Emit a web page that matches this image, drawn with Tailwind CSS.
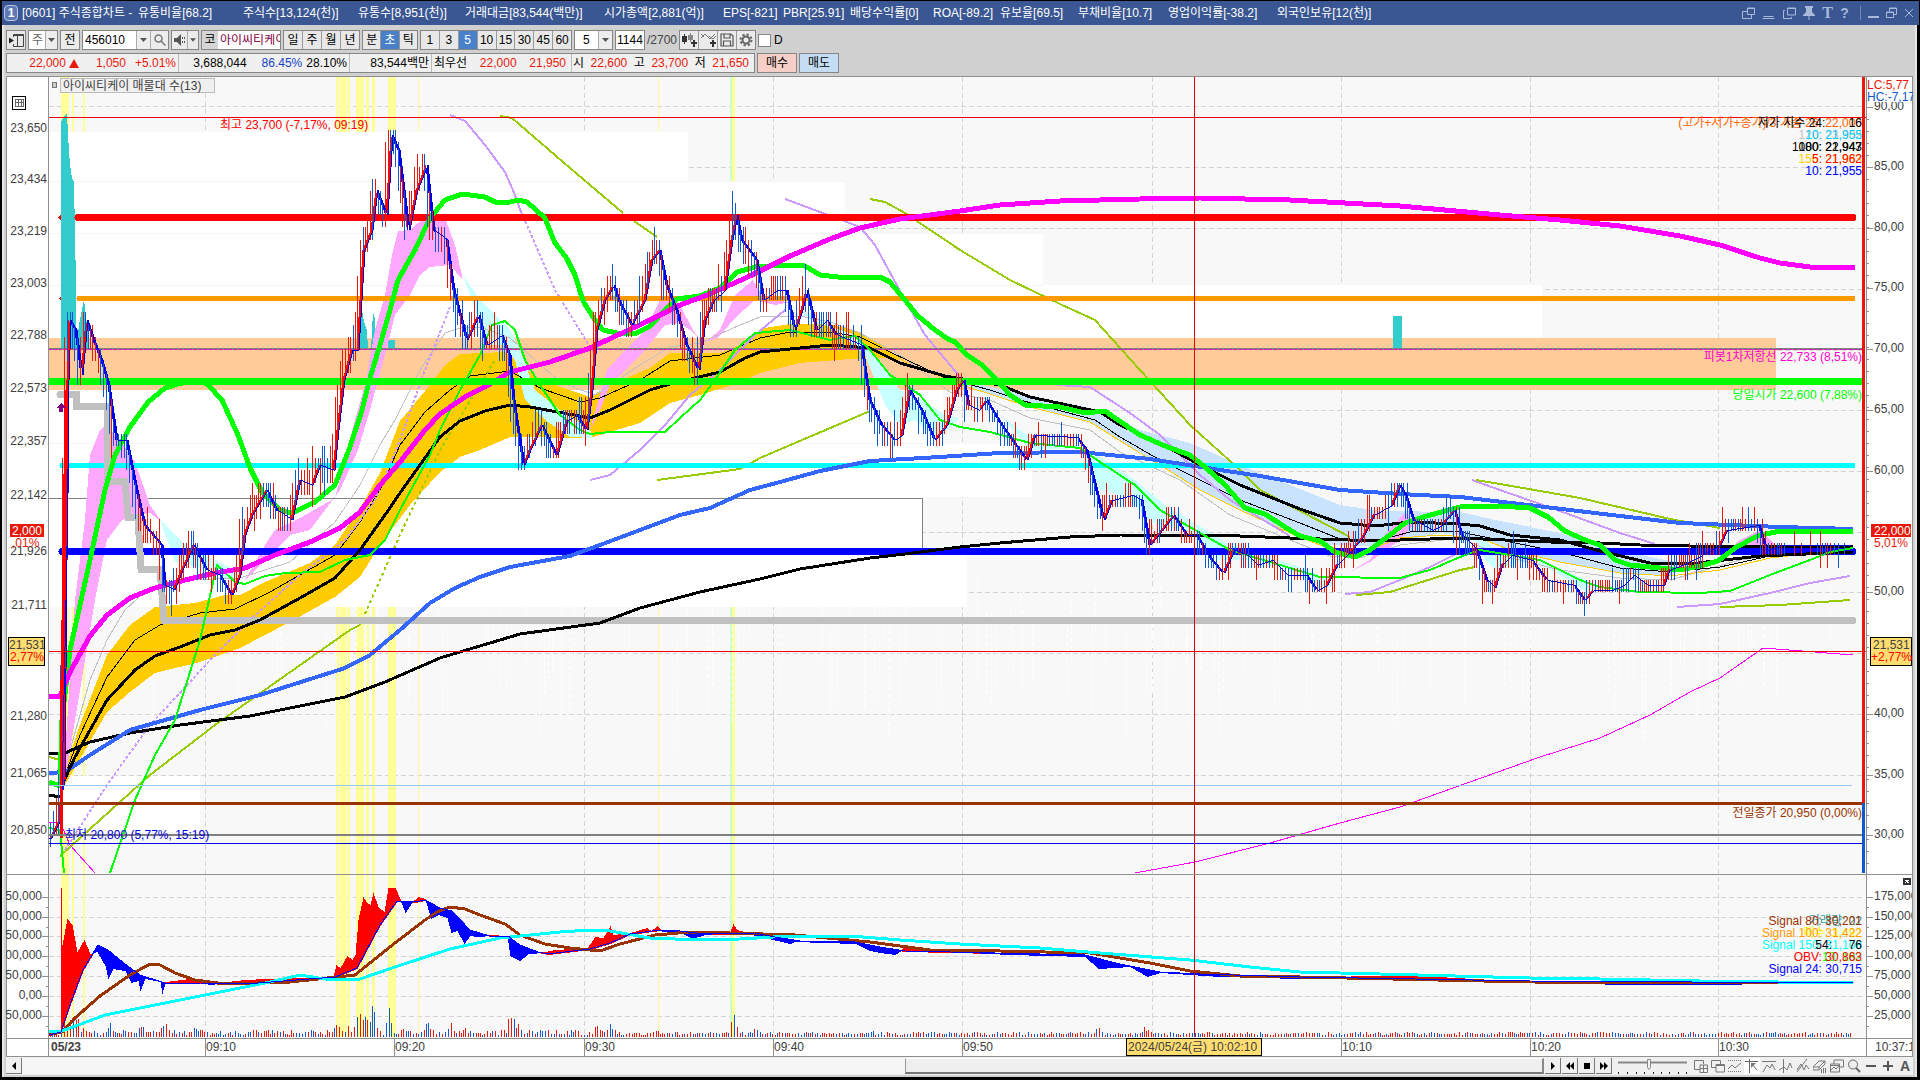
<!DOCTYPE html>
<html lang="ko">

<head>
  <meta charset="UTF-8" />
  <meta name="viewport" content="width=device-width, initial-scale=1.0" />
  <title>[0601] 주식종합차트</title>
  <script src="https://cdn.jsdelivr.net/npm/@tailwindcss/browser@4"></script>
</head>

<body class="bg-black pt-px font-['Liberation_Sans','Noto_Sans_CJK_KR',sans-serif] text-xs leading-none text-black">
  <!-- Title bar -->
  <header class="mr-px ml-[2px] flex h-6 items-center bg-[#3a5693] pl-[2px] text-white">
    <span class="mr-1 flex h-4 w-[14px] items-center justify-center rounded-sm border border-[#b9c6e4] bg-[#5f7ab3] font-bold">1</span>
    <h1 class="flex gap-[7px] whitespace-nowrap">
      <span class="w-[109px]">[0601] 주식종합차트 -</span>
      <span class="w-[98px]">유통비율[68.2]</span>
      <span class="w-[108px]">주식수[13,124(천)]</span>
      <span class="w-[100px]">유통수[8,951(천)]</span>
      <span class="w-[132px]">거래대금[83,544(백만)]</span>
      <span class="w-[112px]">시가총액[2,881(억)]</span>
      <span class="w-[53px]">EPS[-821]</span>
      <span class="w-[60px]">PBR[25.91]</span>
      <span class="w-[76px]">배당수익률[0]</span>
      <span class="w-[60px]">ROA[-89.2]</span>
      <span class="w-[71px]">유보율[69.5]</span>
      <span class="w-[83px]">부채비율[10.7]</span>
      <span class="w-[102px]">영업이익률[-38.2]</span>
      <span>외국인보유[12(천)]</span>
    </h1>
    <div class="ml-auto flex items-center gap-[7px] pr-[5px] text-[#a9b9da]">
      <button aria-label="분리"><svg class="h-3 w-[13px]" viewBox="0 0 13 12" fill="none" stroke="currentColor"><path d="M5 4.500H.500v7h9V8M5.500 1h7v6.500h-7zM5.500 1.500h7" /></svg></button>
      <button aria-label="접기"><svg class="h-3 w-[13px]" viewBox="0 0 13 12" fill="none" stroke="currentColor"><path d="M1.500 9.500h10M.500 11.500h12" /></svg></button>
      <button aria-label="복사" class="ml-px"><svg class="h-3 w-[13px]" viewBox="0 0 13 12" fill="none" stroke="currentColor"><path d="M4.500 1h8v7h-8zM4.500 1.500h8M2 3.500H.500v8h8V10" /></svg></button>
      <button aria-label="고정"><svg class="h-[14px] w-3" viewBox="0 0 12 14" fill="currentColor"><path d="M2 0h8v2H9v4l3 3v1H6.500v4h-1v-4H0V9l3-3V2H2z" /></svg></button>
      <button aria-label="글꼴" class="w-[11px] font-['Liberation_Serif',serif] text-base font-bold leading-none">T</button>
      <button aria-label="도움말" class="w-[9px] text-sm font-bold leading-none">?</button>
      <span class="ml-1 h-[14px] w-px bg-[#7488ae]"></span>
      <button aria-label="최소화"><svg class="h-3 w-[11px]" viewBox="0 0 11 12"><path d="M0 9h11v2H0z" fill="currentColor" /></svg></button>
      <button aria-label="복원"><svg class="h-3 w-[11px]" viewBox="0 0 11 12" fill="none" stroke="currentColor"><path d="M3.500 4V1h7v6.500H8M3 1.500h8M.500 5h7v5.500h-7zM0 5.500h8" /></svg></button>
      <button aria-label="닫기"><svg class="h-3 w-[10px]" viewBox="0 0 10 12" fill="none" stroke="currentColor"><path d="M1 2l8 8M9 2l-8 8" /></svg></button>
    </div>
  </header>

  <div class="mr-[3px] ml-[2px] border-r-2 border-l-2 border-[#e6e6e6] bg-[#d0d0d0] px-[2px] pb-[2px]">
    <!-- Toolbar -->
    <div class="flex h-[25px] items-end gap-[2px] whitespace-nowrap">
      <button aria-label="패널" class="flex h-5 w-5 items-center justify-center border border-[#868686] bg-[#e8e8e8]">
        <svg class="h-[13px] w-[15px]" viewBox="0 0 15 13" fill="none" stroke="#444"><path d="M4.500 3V.500h10v12h-10V10M4 1.500h11M8.500 1v11" /><path d="M0 3.500v6l5-3z" fill="#222" stroke="none" /></svg>
      </button>
      <label class="relative flex h-5 w-[30px] items-center border border-[#868686] bg-white">
        <select aria-label="주기" class="h-full w-full appearance-none pl-[3px] text-[#666]"><option>주</option></select>
        <span class="pointer-events-none absolute top-0 right-0 flex h-full w-3 items-center justify-center border-l border-[#aaa] bg-[#ededed]"><svg class="h-1 w-[7px]" viewBox="0 0 7 4"><path d="M0 0h7L3.500 4z" fill="#555" /></svg></span>
      </label>
      <button class="h-5 w-5 border border-[#868686] bg-[#ebebeb]">전</button>
      <div class="flex h-5 w-[87px] border border-[#868686] bg-white">
        <input aria-label="종목코드" value="456010" class="h-full w-[53px] pl-[2px]" />
        <button aria-label="종목 목록" class="flex w-[14px] items-center justify-center border-l border-[#aaa] bg-[#ededed]"><svg class="h-1 w-[7px]" viewBox="0 0 7 4"><path d="M0 0h7L3.500 4z" fill="#555" /></svg></button>
        <button aria-label="검색" class="flex w-[18px] items-center justify-center border-l border-[#aaa] bg-[#ededed]"><svg class="h-3 w-3" viewBox="0 0 12 12" fill="none" stroke="#777" stroke-width="1.500"><circle cx="4.500" cy="4.500" r="3.500" /><path d="M7 7l4.500 4.500" /></svg></button>
      </div>
      <div class="flex h-5 w-7 border border-[#868686] bg-[#ebebeb]">
        <button aria-label="소리" class="flex w-4 items-center justify-center"><svg class="h-3 w-3" viewBox="0 0 12 12" fill="#555"><path d="M0 4h3l4-4v12L3 8H0zM8 3h1v2H8zM8 7h1v2H8zM10 3h1v2h-1zM10 7h1v2h-1z" /></svg></button>
        <button aria-label="소리 설정" class="flex w-[11px] items-center justify-center border-l border-[#aaa]"><svg class="h-1 w-[6px]" viewBox="0 0 7 4"><path d="M0 0h7L3.500 4z" fill="#555" /></svg></button>
      </div>
      <div class="flex h-5 w-20 items-center overflow-hidden border border-[#868686] bg-white">
        <span class="flex h-full w-4 shrink-0 items-center justify-center bg-[#d5d5d5]">코</span>
        <span class="ml-[2px] w-[60px] overflow-hidden text-[#800040]">아이씨티케이</span>
      </div>
      <div class="flex h-5 w-[77px] divide-x divide-[#999] border border-[#868686] bg-[#e8e8e8]">
        <button class="flex-1">일</button><button class="flex-1">주</button><button class="flex-1">월</button><button class="flex-1">년</button>
      </div>
      <div class="flex h-5 w-[56px] divide-x divide-[#999] border border-[#868686] bg-[#e8e8e8]">
        <button class="flex-1">분</button><button class="flex-1 bg-[#4a80c8] text-white">초</button><button class="flex-1">틱</button>
      </div>
      <div class="flex h-5 w-[152px] divide-x divide-[#999] border border-[#868686] bg-[#e8e8e8]">
        <button class="flex-1">1</button><button class="flex-1">3</button><button class="flex-1 bg-[#4a80c8] text-white">5</button><button class="flex-1">10</button><button class="flex-1">15</button><button class="flex-1">30</button><button class="flex-1">45</button><button class="flex-1">60</button>
      </div>
      <label class="relative flex h-5 w-[39px] border border-[#868686] bg-white">
        <select aria-label="간격" class="h-full w-full appearance-none pl-2"><option>5</option></select>
        <span class="pointer-events-none absolute top-0 right-0 flex h-full w-[14px] items-center justify-center border-l border-[#aaa] bg-[#ededed]"><svg class="h-1 w-[7px]" viewBox="0 0 7 4"><path d="M0 0h7L3.500 4z" fill="#555" /></svg></span>
      </label>
      <input aria-label="봉 개수" value="1144" class="h-5 w-[30px] border border-[#868686] bg-white pl-px" />
      <span class="flex h-5 w-[30px] items-center text-[#444]">/2700</span>
      <div class="flex h-5 w-[77px] divide-x divide-[#999] border border-[#868686] bg-[#ebebeb]">
        <button aria-label="봉 추가" class="flex flex-1 items-center justify-center"><svg class="h-[14px] w-[15px]" viewBox="0 0 15 14"><path d="M0 3h5v6H0zM2 1h1v10H2z" fill="#333" /><path d="M6 2h5v5H6zM8 0h1v9H8z" fill="#888" /><path d="M11 7h2v2h2v2h-2v3h-2v-3H9V9h2z" fill="#333" /></svg></button>
        <button aria-label="지표 추가" class="flex flex-1 items-center justify-center"><svg class="h-[14px] w-[15px]" viewBox="0 0 15 14" fill="none" stroke="#777"><path d="M0 5l4-4 5 5 5-5M0 1l3 3M8 3l4 3 3-3" /><path d="M11 7h2v2h2v2h-2v3h-2v-3H9V9h2z" fill="#333" stroke="none" /></svg></button>
        <button aria-label="저장" class="flex flex-1 items-center justify-center"><svg class="h-[14px] w-[14px]" viewBox="0 0 14 14" fill="none" stroke="#555" stroke-width="1.200"><path d="M1 1h10l2 2v10H1zM4 1v4h6V1M3.500 13V8h7v5" /></svg></button>
        <button aria-label="설정" class="flex flex-1 items-center justify-center"><svg class="h-[14px] w-[14px]" viewBox="0 0 14 14" fill="none" stroke="#666"><circle cx="7" cy="7" r="3.500" stroke-width="2" /><circle cx="7" cy="7" r="5.500" stroke-width="2" stroke-dasharray="2.300 2" /></svg></button>
      </div>
      <label class="flex h-5 items-center gap-[3px]"><input type="checkbox" class="h-[13px] w-[13px] appearance-none border border-[#888] bg-white" />D</label>
    </div>

    <!-- Quote row -->
    <div class="mt-[3px] flex h-5 items-stretch gap-[2px] whitespace-nowrap text-[#e8190a]">
      <div class="flex w-[749px] divide-x divide-[#bbb] border border-[#868686] bg-[#f0f0f0]">
        <div class="flex w-[172px] items-center justify-end pr-[2px]">
          <span>22,000</span><svg class="ml-[3px] h-[9px] w-[10px]" viewBox="0 0 10 9"><path d="M5 0l5 9H0z" fill="#e8190a" /></svg>
          <span class="ml-[17px]">1,050</span><span class="ml-[9px]">+5.01%</span>
        </div>
        <div class="flex w-[171px] items-center justify-end gap-1 pr-[2px] text-black">
          <span class="mr-[11px]">3,688,044</span><span class="text-[#1543c5]">86.45%</span><span>28.10%</span>
        </div>
        <div class="flex w-[82px] items-center justify-end pr-[2px] text-black">83,544백만</div>
        <div class="flex w-[140px] items-center justify-between pr-[5px] pl-[2px]"><span class="text-black">최우선</span><span>22,000</span><span>21,950</span></div>
        <div class="flex flex-1 items-center justify-between pr-[5px] pl-px">
          <span class="text-black">시</span><span>22,600</span><span class="text-black">고</span><span>23,700</span><span class="text-black">저</span><span>21,650</span>
        </div>
      </div>
      <button class="w-10 border border-[#868686] bg-[#f6cfc9] text-black">매수</button>
      <button class="w-10 border border-[#868686] bg-[#c5ddf3] text-black">매도</button>
    </div>

    <!-- Chart -->
    <svg id="chart" class="mt-[3px] block w-full" viewBox="6 76 1907 981" shape-rendering="crispEdges" fill="none" font-size="12">
      <rect x="6" y="76" width="1909" height="981" fill="#fff" />
      <rect x="49" y="76" width="1817" height="961" fill="#f8f8f8" />
      <g id="grid" stroke="#d4d4d4" stroke-dasharray="5 3"></g>
      <g id="stripes" fill="#ffff99"></g>
      <!-- volume-at-price blocks -->
      <g fill="#fff">
        <path d="M49 132H688V182H845V233H1043V285H1542V338H49z" />
        <path d="M49 390H943V444H1032V497H922V549H967V607H49z" />
        <path d="M49 776H200V832H49z" />
      </g>
      <path d="M49 181.500H845M49 233.500H1043M49 285.500H1043M49 443.500H940" stroke="#f5f5f5" />
      <rect x="49" y="338" width="1727" height="52" fill="#ffcb99" />
      <path d="M49 498.500H922.500V549" stroke="#808080" />
      <g id="noise" stroke="#fff" stroke-dasharray="4 3"></g>
      <!-- teal histogram -->
      <path fill="#33cccc" d="M61 349V122L64 117L67 113L68 135L70 165L72 178L74 182L76 285V349zM76 349L79 325L84 300L87 325L89 349zM359 349L362 310L364 322L367 330L368 349zM371 349L373 312L375 318V349zM388 340h7v9h-7zM1393 316h9v33h-9z" />
      <g id="areas"></g>
      <g id="thin"></g>
      <path d="M49 348.500H1862" stroke="#808080" stroke-width="2" />
      <path d="M49 349.500H1862" stroke="#ff00cc" stroke-dasharray="3 2" />
      <g stroke-linecap="round">
        <path d="M78 217.500H1853" stroke="#f00" stroke-width="7" />
        <path d="M79 298.500H1853" stroke="#ff9900" stroke-width="5" />
        <path d="M62 465.500H1853" stroke="#0ff" stroke-width="5" />
        <path d="M62 551.500H1853" stroke="#00f" stroke-width="7" />
        <path d="M60 394.500H76V406H107V481H125L128 517H138L141 569H160L164 620.500H1853" stroke="#c0c0c0" stroke-width="7" />
      </g>
      <path d="M58 217.500l3-3v6zM59 298.500l2-2v4z" fill="#f00" />
      <g id="thick"></g>
      <path d="M49 381.500H1862" stroke="#0f0" stroke-width="7" />
      <g id="over"></g>
      <path d="M61 403l5 5h-3v4h-4v-4h-3z" fill="#800080" />
      <path d="M49 117.500H1866M49 651.500H1866" stroke="#f00000" />
      <path d="M49 785.500H1852" stroke="#99c8ff" />
      <path d="M49 803.500H1862" stroke="#993300" stroke-width="3" />
      <path d="M49 835H1862" stroke="#808080" stroke-width="2" />
      <path d="M49 843.500H1862" stroke="#0000e0" />
      <g id="sub"></g>
      <path d="M1194.500 77V1037" stroke="#e00000" />
      <path d="M1863.500 77V803" stroke="#e8190a" stroke-width="3" />
      <path d="M1863.500 803V873" stroke="#1159cc" stroke-width="3" />
      <!-- frame -->
      <path d="M6 76.500H1914.500M6.500 76V1057M48.500 76V1057M1866.500 76V1057M6 874.500H1914M6 1038.500H1914M6 1056.500H1914" stroke="#909090" />
      <g id="labels" fill="#404040"></g>
      <path d="M1912.500 76V1057" stroke="#909090" />

      <rect x="60.500" y="78.500" width="154" height="14" fill="#f0f0f0" stroke="#bbb" />
      <rect x="52.500" y="82.500" width="4" height="5" fill="#ccc" stroke="#777" />
      <text x="63" y="90" fill="#404040">아이씨티케이 매물대 수(13)</text>
      <path d="M15.500 99.500h8v7h-8zM15 102.500h9M18.500 99v8M21.500 99v8" stroke="#666" />
      <path d="M12.500 96.500h13v13h-13z" stroke="#000" />

      <text x="220" y="129" fill="#f00">최고 23,700 (-7,17%, 09:19)</text>
      <text x="65" y="839" fill="#0000e0">최저 20,800 (5,77%, 15:19)</text>
      <g text-anchor="end">
        <text x="1862" y="127" fill="#ff6600">(고가+저가+종가)/3 가중 26: 22,000</text>
        <text x="1862" y="127" fill="#000">저가 지수 24:&#160;&#160;&#160;&#160;&#160;&#160;&#160;16</text>
        <text x="1862" y="139" fill="#c0c0c0">120: 23,302</text>
        <text x="1862" y="139" fill="#00ccff">10: 21,955</text>
        <text x="1862" y="151" fill="#000">1000: 22,947</text>
        <text x="1862" y="151" fill="#000">180: 21,943</text>
        <text x="1862" y="163" fill="#ffcc00">156: 21,983</text>
        <text x="1862" y="163" fill="#f00">5: 21,962</text>
        <text x="1862" y="175" fill="#c8e8ff">30: 21,955</text>
        <text x="1862" y="175" fill="#00f">10: 21,955</text>
        <text x="1862" y="361" fill="#ff00cc">피봇1차저항선 22,733 (8,51%)</text>
        <text x="1862" y="399" fill="#0f0">당일시가 22,600 (7,88%)</text>
        <text x="1862" y="817" fill="#993300">전일종가 20,950 (0,00%)</text>
        <text x="1862" y="925" fill="#339999">거래량: 22</text>
        <text x="1862" y="925" fill="#993300">Signal 80: 30,201</text>
        <text x="1862" y="937" fill="#ffff00">매수: 3,492</text>
        <text x="1862" y="937" fill="#ff9900">Signal 100: 31,422</text>
        <text x="1862" y="949" fill="#0ff">Signal 150: 31,108</text>
        <text x="1862" y="949" fill="#000">54:&#160;&#160;&#160;&#160;&#160;76</text>
        <text x="1862" y="961" fill="#0f0">13: 182</text>
        <text x="1862" y="961" fill="#f00">OBV: 30,863</text>
        <text x="1862" y="973" fill="#00f">Signal 24: 30,715</text>
      </g>
      <rect x="1867" y="78" width="45" height="24" fill="#fff" />
      <text x="1867" y="89" fill="#e8190a">LC:5,77</text>
      <text x="1867" y="101" fill="#1159cc">HC:-7,17</text>
      <!-- price tags -->
      <rect x="10" y="524" width="34" height="13" fill="#e8190a" />
      <text x="12" y="535" fill="#fff">2,000</text>
      <text x="12" y="547" fill="#e8190a">,01%</text>
      <rect x="8.500" y="637.500" width="36" height="28" fill="#ffdd70" stroke="#000" />
      <text x="9" y="649" fill="#404040">21,531</text>
      <text x="10" y="661" fill="#f00">2,77%</text>
      <rect x="1871" y="524" width="40" height="13" fill="#e8190a" />
      <text x="1874" y="535" fill="#fff">22,000</text>
      <text x="1874" y="547" fill="#e8190a">5,01%</text>
      <rect x="1870.500" y="637.500" width="41" height="28" fill="#ffdd70" stroke="#000" />
      <text x="1873" y="649" fill="#404040">21,531</text>
      <text x="1871" y="661" fill="#f00">+2,77%</text>
      <rect x="1903" y="878" width="8" height="7" fill="#333" />
      <path d="M1905 880l4 3M1909 880l-4 3" stroke="#fff" />
      <rect x="1126.500" y="1038.500" width="135" height="17" fill="#ffdd70" stroke="#000" />
      <text x="1128" y="1051" fill="#404040">2024/05/24(금) 10:02:10</text>
    </svg>

    <!-- Scroll bar and drawing tools -->
    <div class="flex h-[18px] items-center bg-[#f0f0f0] text-[#555]">
      <button aria-label="왼쪽" class="flex h-4 w-4 items-center justify-center border-r border-b border-[#777] bg-[#f0f0f0]"><svg class="h-2 w-1" viewBox="0 0 4 8"><path d="M4 0v8L0 4z" fill="#000" /></svg></button>
      <div class="flex h-4 flex-1 justify-end bg-[#f6f6f6]"><div class="w-[42%] border-t border-r-2 border-b-2 border-l border-t-white border-r-[#888] border-b-[#777] border-l-[#999] bg-[#efefef]"></div></div>
      <div class="ml-px flex h-4 gap-px text-black">
        <button aria-label="재생" class="flex w-4 items-center justify-center border-r border-b border-[#777]"><svg class="h-2 w-1" viewBox="0 0 4 8"><path d="M0 0v8l4-4z" /></svg></button>
        <button aria-label="뒤로" class="flex w-4 items-center justify-center border-r border-b border-[#777]"><svg class="h-2 w-2" viewBox="0 0 8 8"><path d="M4 0v8L0 4zM8 0v8L4 4z" /></svg></button>
        <button aria-label="정지" class="flex w-4 items-center justify-center border-r border-b border-[#777]"><svg class="h-[6px] w-[6px]" viewBox="0 0 6 6"><path d="M0 0h6v6H0z" /></svg></button>
        <button aria-label="앞으로" class="flex w-4 items-center justify-center border-r border-b border-[#777]"><svg class="h-2 w-2" viewBox="0 0 8 8"><path d="M0 0v8l4-4zM4 0v8l4-4z" /></svg></button>
      </div>
      <div class="relative mx-[6px] h-4 w-[69px]">
        <input type="range" aria-label="속도" value="45" class="absolute inset-0 h-full w-full opacity-0" />
        <svg class="pointer-events-none h-4 w-[69px]" viewBox="0 0 69 16" fill="none" stroke="#888"><path d="M0 4.500h69" stroke-width="2" /><path d="M.500 14v3M9.500 14v3M18.500 14v3M26.500 14v3M35.500 14v3M43.500 14v3M51.500 14v3M60.500 14v3M68.500 14v3" stroke="#222" /><path d="M29.500 1.500h3v8l-1.500 2-1.500-2z" fill="#f0f0f0" /></svg>
      </div>
      <div class="flex items-center gap-px">
        <button aria-label="창 추가" class="flex w-4 justify-center"><svg class="h-[14px] w-[14px]" viewBox="0 0 14 14" fill="none" stroke="#777"><path d="M6 10.500H.500v-9h9V5M6 6h7.500v7.500H6zM9.500 6v7M6 9.500h7" /></svg></button>
        <button aria-label="창 겹침" class="flex w-4 justify-center"><svg class="h-[14px] w-[14px]" viewBox="0 0 14 14" fill="none" stroke="#777"><path d="M5 8.500H.500v-7h9V5M5 5.500h8.500v7.500H5zM5 6.500h8" /></svg></button>
        <button aria-label="영역" class="flex w-4 justify-center"><svg class="h-[14px] w-[14px]" viewBox="0 0 14 14" fill="none" stroke="#777"><path d="M0 1.500h14M0 12.500h14" stroke-dasharray="1 1" /><path d="M0 10l4-4 3 3 6-5" /></svg></button>
        <button aria-label="커서" class="flex h-4 w-4 items-center justify-center bg-white"><svg class="h-[14px] w-[14px]" viewBox="0 0 14 14" fill="none" stroke="#666"><path d="M0 2.500h13M4.500 0v14M6 4l6 7" /><path d="M6 4h5L6 9z" fill="#777" stroke="none" /></svg></button>
        <button aria-label="수평선" class="flex w-4 justify-center"><svg class="h-[14px] w-[14px]" viewBox="0 0 14 14" fill="none" stroke="#777"><path d="M0 2.500h14M1 13l4-7 3 3 2-4 3 6" /></svg></button>
        <button aria-label="수직선" class="flex w-4 justify-center"><svg class="h-[14px] w-[14px]" viewBox="0 0 14 14" fill="none" stroke="#777"><path d="M4.500 0v14M0 11l5-3 3 3 3-7 2 5" /></svg></button>
        <button aria-label="추세선" class="flex w-4 justify-center"><svg class="h-[14px] w-[14px]" viewBox="0 0 14 14" fill="none" stroke="#777"><path d="M1 13L11 0M1 11l4-6 3 6 2-5 3 4" /></svg></button>
        <button aria-label="지우개" class="flex w-4 justify-center"><svg class="h-[14px] w-[14px]" viewBox="0 0 14 14" fill="none" stroke="#777"><path d="M0 8l6-6h6L6 8zM0 8v3h6V8M6 11l6-6V2M8.500 10v4M10.500 9v5M12.500 9v5" /></svg></button>
        <button aria-label="차트 겹침" class="flex w-4 justify-center"><svg class="h-[14px] w-[14px]" viewBox="0 0 14 14" fill="none" stroke="#777"><path d="M4 5V1h9.500v7H10M.500 5h9v8h-9zM0 6.500h10M1 11l3-3 2 2 3-3" /></svg></button>
        <button aria-label="확대경" class="flex w-4 justify-center"><svg class="h-[14px] w-[14px]" viewBox="0 0 14 14" fill="none" stroke="#666"><circle cx="6" cy="5.500" r="4.500" /><path d="M9 9l4 4" stroke-width="2" /></svg></button>
        <button aria-label="축소" class="flex w-4 justify-center"><svg class="h-[10px] w-[10px]" viewBox="0 0 10 10"><path d="M0 4h10v2H0z" fill="#555" /></svg></button>
        <button aria-label="확대" class="flex w-4 justify-center"><svg class="h-[10px] w-[10px]" viewBox="0 0 10 10"><path d="M0 4h4V0h2v4h4v2H6v4H4V6H0z" fill="#555" /></svg></button>
        <button class="w-4 text-sm font-bold leading-none">A</button>
      </div>
    </div>
  </div>

  <script>
    const NS = 'http://www.w3.org/2000/svg';

    function add(group, tag, attrs, text) {
      const el = document.createElementNS(NS, tag);
      for (const k in attrs) el.setAttribute(k, attrs[k]);
      if (text) el.textContent = text;
      document.getElementById(group).appendChild(el);
    }
    const line = (group, pts, color, width, dash) =>
      add(group, 'polyline', { points: pts, stroke: color, 'stroke-width': width || 1, 'stroke-linejoin': 'round', ...(dash ? { 'stroke-dasharray': dash } : {}) });
    const area = (pts, color) => add('areas', 'polygon', { points: pts, fill: color });
    const parse = s => s.split(' ').map(p => p.split(',').map(Number));

    // y of a polyline at x
    function at(pts, x) {
      for (let i = 1; i < pts.length; i++) {
        if (x <= pts[i][0]) {
          const [x0, y0] = pts[i - 1], [x1, y1] = pts[i];
          return y0 + (y1 - y0) * (x - x0) / (x1 - x0 || 1);
        }
      }
      return pts[pts.length - 1][1];
    }
    let seed = 7;
    const rnd = () => (seed = (seed * 16807) % 2147483647) / 2147483647;

    // grid and axis labels
    const times = [[205, '09:10'], [394, '09:20'], [584, '09:30'], [773, '09:40'], [962, '09:50'], [1152, ''], [1341, '10:10'], [1530, '10:20'], [1718, '10:30']];
    times.forEach(([x, t]) => {
      add('grid', 'path', { d: `M${x + .5} 77V1037` });
      if (t) {
        add('labels', 'path', { d: `M${x + .5} 1038V1056`, stroke: '#909090' });
        add('labels', 'text', { x: x + 1, y: 1051 }, t);
      }
    });
    add('labels', 'text', { x: 51, y: 1051, 'font-weight': 'bold' }, '05/23');
    add('labels', 'text', { x: 1875, y: 1051 }, '10:37:1');
    [106, 167, 228, 289, 350, 410, 471, 532, 592, 653, 714, 775, 897, 917, 936, 956, 976, 996, 1016].forEach(y => add('grid', 'path', { d: `M49 ${y + .5}H1862` }));
    [[128, '23,650'], [179, '23,434'], [231, '23,219'], [283, '23,003'], [335, '22,788'], [388, '22,573'], [441, '22,357'], [495, '22,142'], [551, '21,926'], [605, '21,711'], [716, '21,280'], [773, '21,065'], [830, '20,850']].forEach(([y, t]) =>
      add('labels', 'text', { x: 47, y: y + 4, 'text-anchor': 'end' }, t));
    [[106, '90,00'], [166, '85,00'], [227, '80,00'], [287, '75,00'], [348, '70,00'], [409, '65,00'], [470, '60,00'], [591, '50,00'], [713, '40,00'], [774, '35,00'], [834, '30,00']].forEach(([y, t]) => {
      add('labels', 'text', { x: 1874, y: y + 4 }, t);
      add('labels', 'path', { d: `M1867 ${y + 1.5}h6`, stroke: '#909090' });
    });
    for (let y = 119; y < 870; y += 12) add('labels', 'path', { d: `M1867 ${y + .5}h2`, stroke: '#909090' });
    [[897, '175,000', '50,000'], [917, '150,000', '00,000'], [936, '125,000', '50,000'], [956, '100,000', '00,000'], [976, '75,000', '50,000'], [996, '50,000', '0,00'], [1016, '25,000', '50,000']].forEach(([y, r, l]) => {
      add('labels', 'text', { x: 1874, y: y + 3 }, r);
      add('labels', 'text', { x: 42, y: y + 3, 'text-anchor': 'end' }, l);
      add('labels', 'path', { d: `M1867 ${y + .5}h6M42 ${y + .5}h6M46 ${y + 10.5}h2M1867 ${y + 10.5}h2`, stroke: '#909090' });
    });

    // highlighted sessions
    [[61, 8], [72, 2], [83, 2], [336, 3], [340, 7], [348, 2], [356, 8], [366, 3], [372, 3], [388, 8], [418, 1], [658, 1], [732, 3]].forEach(([x, w]) =>
      add('stripes', 'path', { d: `M${x} 77h${w}V1037h-${w}z` }));
    add('stripes', 'rect', { x: 730, y: 77, width: 2, height: 960, fill: '#ccffcc' });

    // faint white traces
    for (let i = 0; i < 150; i++) {
      const x = Math.round(150 + rnd() * 1690) + .5, y = Math.round(580 + rnd() * 60);
      add('noise', 'path', { d: `M${x} ${y}v${Math.round(20 + rnd() * 90)}` });
    }

    // bands
    area('65,770 80,725 107,655 130,625 155,607 195,603 225,595 240,595 265,582 310,563 335,545 360,508 380,473 400,421 430,385 445,365 460,354 505,352 540,380 590,397 610,385 650,368 670,353 720,353 740,345 765,328 790,324 830,324 860,332 885,348 900,360 885,358 850,359 800,363 760,373 735,384 700,395 670,403 640,423 590,438 510,437 480,450 460,457 440,472 410,505 380,545 360,577 335,597 290,622 240,648 200,662 155,673 130,692 107,712 65,785', '#ffcc00');
    area('945,378 1000,389 1090,408 1140,430 1190,443 1240,465 1290,485 1340,505 1380,511 1460,512 1500,521 1560,533 1600,545 1650,557 1690,565 1670,576 1620,573 1560,562 1510,550 1480,538 1440,533 1380,546 1320,545 1290,533 1240,510 1200,490 1160,465 1130,447 1090,422 1030,407 965,386', '#c9e3ff');
    area('64,770 75,600 85,520 90,455 100,430 106,425 120,440 135,462 150,505 162,522 150,513 122,520 107,540 95,600 80,690 66,775', '#ffa8ff');
    area('245,580 265,545 275,530 300,518 335,498 345,460 355,420 365,385 375,330 385,295 392,255 398,231 410,230 425,217 445,218 455,245 463,280 450,265 430,267 420,275 410,295 395,315 385,355 370,410 358,450 340,490 310,530 290,535 270,555', '#ffa8ff');
    area('590,430 607,370 625,350 645,330 660,300 668,298 680,305 693,330 700,340 690,330 680,323 665,325 645,350 610,385 600,410', '#ffa8ff');
    area('705,342 720,330 735,295 753,280 765,300 790,302 775,305 755,300 735,318 718,338', '#ffa8ff');
    area('1350,572 1370,560 1385,535 1405,512 1415,523 1400,540 1370,562', '#ffa8ff');
    area('1660,585 1710,565 1740,540 1760,530 1775,545 1740,550 1700,570', '#ffa8ff');
    area('160,520 190,550 215,560 235,570 245,570 235,582 200,568 175,562', '#c8ffff');
    area('463,275 480,300 495,315 510,330 520,350 535,390 560,410 590,430 593,438 570,437 545,420 525,400 515,360 505,345 490,345 475,310', '#c8ffff');
    area('790,305 815,322 850,333 865,345 885,370 900,390 912,395 930,405 945,415 960,418 945,432 935,438 915,420 900,425 885,405 865,355 830,325', '#c8ffff');
    area('1000,415 1040,445 1080,445 1100,457 1135,480 1165,505 1190,520 1230,545 1300,567 1325,578 1335,585 1320,590 1290,570 1250,560 1220,560 1185,530 1150,523 1130,497 1100,490 1080,448 1030,450', '#c8ffff');
    area('1475,540 1485,540 1500,555 1530,556 1575,575 1600,585 1590,595 1570,580 1530,560 1495,570 1485,560', '#c8ffff');

    // thin averages
    line('thin', '70,750 90,680 107,640 125,610 150,587 190,580 240,578 290,562 335,522 360,485 380,445 395,420 420,370 445,333 460,328 480,327 510,338 560,382 595,395 610,385 640,365 670,347 700,343 740,325 760,317 800,316 830,322 860,333 900,355 950,392 990,400 1030,418 1090,430 1120,452 1180,480 1230,515 1290,540 1330,556 1360,558 1400,545 1460,538 1500,555 1560,570 1620,578 1670,580 1740,560 1853,545', '#c0c0c0');
    line('thin', '880,345 910,365 965,386 1030,407 1090,422 1130,447 1160,465 1200,490 1240,510 1290,533 1320,545 1360,553 1400,538 1440,535 1480,538 1510,550 1560,562 1620,573 1670,576 1720,570 1770,558 1853,549', '#ffcc00');
    line('thin', '65,775 80,735 107,677 135,640 160,625 200,613 235,609 270,592 335,555 360,522 380,490 400,445 425,412 450,390 470,376 510,371 540,388 580,402 600,398 640,380 670,361 720,355 760,338 790,332 830,332 860,337 890,352 945,378 990,390 1020,400 1095,420 1120,437 1160,460 1200,480 1240,500 1300,523 1340,539 1380,540 1410,532 1455,531 1500,540 1560,552 1620,568 1670,572 1720,567 1770,556 1853,548', '#000');
    ['65,850 107,785 150,725 215,655 250,620 300,575 345,540 375,500 400,440 425,370 450,307', '521,212 527,225 555,290 595,355'].forEach(p => line('thin', p, '#cc99ff', 2, '3 2'));
    ['450,115 465,121 485,145 505,172 515,195 521,212', '590,480 610,475 640,450 665,425 690,395 720,370 740,350 755,335 785,310', '785,199 820,212 860,227 875,245 905,300 925,335 960,377', '1057,385 1090,387 1130,413 1160,435 1200,475 1230,500 1290,536', '1345,594 1370,592 1400,580 1430,567 1460,552', '1472,480 1500,490 1560,511 1620,533 1655,544', '1677,607 1720,604 1770,593 1810,583 1850,576'].forEach(p => line('thin', p, '#cc99ff', 2));
    line('thin', '360,625 380,580 400,535 440,450 495,360', '#99cc00', 2, '3 3');
    ['49,757 60,760', '60,856 150,775 215,725 350,630 360,625', '500,116 512,118 570,168 623,213', '634,221 657,237', '657,480 740,469 760,458 870,411', '870,199 885,202 905,213 960,250 1010,280 1060,304 1095,320 1140,370 1190,425 1240,470 1260,490 1350,537', '1356,595 1390,592 1460,570 1475,567', '1476,480 1500,484 1580,498 1670,519 1720,528', '1720,607 1780,605 1850,600'].forEach(p => line('thin', p, '#99cc00', 2));
    line('thin', '49,822 60,822 70,845 95,873', '#ff00ff');
    line('thin', '1135,873 1195,862 1270,843 1340,823 1400,807 1470,782 1540,757 1600,738 1650,715 1690,692 1720,678 1763,648 1853,655', '#ff00ff');

    // thick averages
    line('thick', '49,753 65,753 90,742 130,733 180,725 250,716 345,697 385,682 440,658 480,646 520,634 600,623 640,608 700,592 760,579 800,569 870,558 905,554 960,547 1000,543 1070,537 1120,535 1240,536 1290,538 1350,540 1400,540 1460,538 1550,542 1600,543 1640,545 1740,547 1853,546', '#000', 3);
    line('thick', '49,773 65,772 90,755 130,730 200,710 260,695 345,668 370,655 400,630 430,603 455,588 480,577 510,567 570,556 600,545 640,530 680,515 710,508 750,490 780,482 820,471 870,461 940,457 1000,453 1080,452 1150,459 1220,470 1260,476 1340,490 1400,494 1460,497 1520,504 1620,516 1680,523 1730,525 1780,527 1853,529', '#3366ff', 4);
    line('thick', '49,795 60,797', '#000', 3);
    line('thick', '62,785 75,757 90,730 107,700 135,670 155,656 180,647 210,635 235,630 260,620 300,598 335,578 360,550 385,515 400,493 420,465 440,437 460,421 485,411 510,405 530,407 590,418 610,410 650,390 670,384 720,372 745,358 760,352 790,349 830,345 870,348 900,363 945,376 1000,385 1030,397 1100,412 1120,425 1160,443 1200,465 1240,485 1300,509 1340,523 1375,526 1410,522 1460,524 1480,526 1510,535 1560,540 1600,551 1650,563 1690,564 1715,561 1760,556 1853,552', '#000', 3);
    line('thick', '110,873 135,800 155,755 175,720 200,640 217,565 235,582 245,584 265,576 285,573 320,572 345,560 370,555 385,540 400,510 430,455 440,430 460,390 480,355 492,325 505,321 515,330 525,360 540,385 560,415 580,430 590,434 610,432 665,432 680,418 700,400 715,380 735,350 755,333 790,330 830,340 855,336 870,350 890,375 920,395 940,420 960,427 990,432 1030,443 1080,448 1100,462 1135,485 1160,510 1195,530 1230,550 1290,568 1320,577 1400,578 1430,570 1460,557 1480,550 1510,555 1540,560 1580,580 1600,587 1640,592 1700,593 1730,591 1770,575 1810,560 1830,552 1853,548', '#0f0', 2);
    line('thick', '49,828 60,830 64,873', '#0f0', 2);
    line('thick', '49,782 60,786 62,720 70,650 90,560 105,490 115,455 130,427 148,402 165,388 178,384 192,381 200,380 208,385 222,400 238,435 250,468 262,492 280,510 292,513 315,502 335,485 350,447 362,410 370,378 380,345 390,310 398,280 415,250 430,218 445,200 462,194 485,197 495,202 510,202 518,200 527,202 545,218 555,243 567,259 575,275 583,301 595,320 603,330 617,333 637,333 650,326 665,310 677,299 700,296 720,288 737,272 755,267 785,265 805,266 820,275 838,277 880,277 890,282 905,300 917,315 935,330 948,339 955,342 967,355 982,365 997,380 1010,395 1025,405 1060,407 1085,413 1105,411 1115,418 1140,435 1165,446 1190,455 1205,467 1225,485 1245,508 1265,514 1285,527 1300,536 1320,541 1335,552 1355,557 1370,550 1390,535 1405,523 1420,518 1445,511 1460,507 1500,506 1530,508 1548,517 1565,531 1585,540 1600,545 1615,560 1630,565 1660,568 1680,570 1700,566 1718,561 1735,548 1757,536 1780,531 1853,531', '#0f0', 5);
    line('thick', '49,696 60,696 70,672 90,636 107,615 130,598 155,588 185,580 215,573 245,568 275,555 310,542 340,528 360,512 380,485 400,462 425,430 440,414 465,397 490,384 510,372 550,362 590,348 620,334 650,320 680,305 710,294 750,276 790,256 830,239 860,228 900,219 960,211 1000,205 1060,201 1140,199 1200,198 1290,200 1400,206 1500,215 1560,220 1620,226 1680,236 1720,245 1760,258 1780,263 1810,267 1855,267', '#ff00ff', 5);

    // candles
    const price = parse('49,838 58,820 60,790 62,780 64,560 66,380 68,320 74,330 80,375 85,320 92,340 100,360 107,385 115,440 125,440 135,490 143,525 160,545 163,585 172,590 180,570 192,545 205,570 218,575 230,595 238,575 243,535 250,515 265,490 275,510 290,520 298,480 310,485 318,465 332,470 336,430 342,380 350,350 356,350 362,250 370,230 375,190 385,215 390,135 397,150 407,230 415,190 425,165 432,230 445,240 452,290 460,320 465,340 477,315 485,345 500,335 508,355 512,400 522,465 528,450 540,425 555,455 565,420 575,415 585,430 590,390 595,330 603,300 612,285 617,300 630,325 643,300 650,260 658,250 665,285 675,310 685,345 697,370 703,320 712,300 723,290 730,240 735,215 740,240 755,260 762,300 775,290 785,290 793,330 800,310 805,290 815,330 825,320 835,335 860,345 868,400 880,425 893,440 900,435 908,390 920,410 933,440 945,425 955,390 962,380 967,405 977,410 985,400 1000,425 1025,460 1033,435 1075,437 1085,450 1102,520 1110,500 1130,495 1140,500 1148,545 1160,530 1172,515 1185,535 1195,535 1210,560 1222,573 1232,550 1245,555 1255,565 1270,560 1285,575 1305,575 1315,590 1325,585 1335,565 1350,550 1362,535 1372,515 1390,505 1398,485 1404,495 1412,520 1430,530 1440,525 1453,510 1460,535 1475,550 1485,580 1493,588 1500,565 1510,555 1530,560 1545,580 1572,585 1583,600 1592,590 1610,590 1622,585 1632,575 1645,585 1662,585 1667,570 1680,565 1700,555 1718,545 1725,530 1757,525 1765,550 1780,545 1853,545');
    // fills between the fast and slow line go under the bars
    const paths = { '#ff0000': '', '#0000ff': '', '#e8190a': '', '#1159cc': '' };
    const snap = y => Math.round((y - 118) / 12.15) * 12.15 + 118;
    let avg = '';
    for (let x = 49; x < 1852; x++) {
      const fast = at(price, x), slow = at(price, Math.max(49, x - 3));
      if (Math.abs(fast - slow) > 3) paths[fast < slow ? '#ff0000' : '#0000ff'] += `M${x + .5} ${fast.toFixed(0)}V${slow.toFixed(0)}`;
      avg += `${x},${slow.toFixed(0)} `;
    }
    for (let x = 50; x < 1852; x += rnd() < .5 ? 2 : 3) {
      if (x > 1785 && rnd() < .6) continue;
      const y = at(price, x), next = at(price, x + 3);
      const reach = x < 900 ? 10 : 7;
      const top = Math.round(snap(Math.min(y, next) - reach - (rnd() < .12 ? 12 : 0)));
      const bottom = Math.round(snap(Math.max(y, next) + reach + (rnd() < .1 ? 12 : 0)));
      const up = next < y - 4 ? rnd() < .8 : next > y + 4 ? rnd() < .25 : rnd() < .55;
      paths[up ? '#e8190a' : '#1159cc'] += `M${x + .5} ${Math.max(top, 118)}V${Math.max(bottom, top + 12)}`;
    }
    for (const c in paths) add('over', 'path', { d: paths[c], stroke: c });
    line('over', avg, '#0000cc', 1);
    line('over', '61,838 61,740 64,560 66,390', '#f00', 3);
    line('over', '62,790 66,600 69,440', '#00f', 1);

    // OBV panel
    const obv = parse('49,1033 60,1033 61,888 62,945 67,919 72,925 77,952 84,940 90,954 97,951 105,965 108,978 113,968 125,970 131,982 138,980 140,990 145,978 160,981 162,993 165,982 190,979 210,984 245,980 265,979 333,977 336,965 340,968 347,956 352,960 355,955 358,920 363,897 366,902 370,905 373,893 378,907 384,912 388,888 395,888 400,899 405,912 412,902 418,897 425,899 431,918 438,914 447,917 451,932 457,930 464,943 470,935 478,936 490,935 507,936 510,955 520,960 528,953 545,952 555,950 587,948 595,937 603,938 610,926 613,935 630,933 647,928 651,931 657,926 662,931 683,933 692,938 705,934 730,932 733,924 737,930 755,935 790,943 795,941 855,943 870,950 880,952 895,954 905,947 950,951 1010,954 1085,956 1098,968 1130,966 1147,976 1160,972 1220,976 1300,978 1400,975 1530,982 1630,984 1853,983');
    const sig = parse('49,1035 61,1032 70,1005 83,970 98,945 108,950 120,960 140,975 165,983 200,983 245,984 335,977 357,968 380,925 397,901 415,902 425,900 440,908 452,911 470,930 490,936 508,936 520,945 538,952 548,954 590,949 610,943 630,934 660,930 680,931 705,934 755,933 775,937 800,941 855,942 880,947 905,951 1085,955 1120,964 1160,972 1200,974 1300,977 1530,981 1853,983');
    let red = '', blue = '', volRed = '', volBlue = '';
    for (let x = 49; x < 1853; x++) {
      const a = Math.round(at(obv, x)), b = Math.round(at(sig, x));
      if (a < b) red += `M${x + .5} ${a}V${b + 1}`; else blue += `M${x + .5} ${b}V${a + 1}`;
    }
    const peaks = [[64, 22], [72, 20], [76, 22], [85, 10], [110, 12], [141, 11], [164, 14], [194, 8], [337, 13], [348, 9], [358, 32], [364, 26], [373, 30], [389, 28], [405, 9], [427, 16], [450, 13], [465, 9], [511, 28], [518, 12], [597, 12], [611, 14], [655, 9], [733, 22], [755, 8], [870, 7], [1098, 9], [1145, 10]];
    for (let x = 50; x < 1853; x += rnd() < .5 ? 2 : 3) {
      let h = 1 + rnd() * (x < 620 ? 5 : 3);
      peaks.forEach(([px, ph]) => { if (Math.abs(px - x) < 5) h = Math.max(h, ph * (1 - Math.abs(px - x) / 7) * (.6 + rnd() * .6)); });
      const seg = `M${x + .5} 1037V${Math.round(1036 - h)}`;
      if (rnd() < .55) volRed += seg; else volBlue += seg;
    }
    add('sub', 'path', { d: volRed, stroke: '#e8190a' });
    add('sub', 'path', { d: volBlue, stroke: '#1159cc' });
    add('sub', 'path', { d: red, stroke: '#f00' });
    add('sub', 'path', { d: blue, stroke: '#00f' });
    line('sub', '49,1034 62,1032 75,1018 100,996 130,975 150,964 160,965 175,973 195,980 225,984 290,982 355,975 370,963 395,943 425,920 437,912 450,907 465,909 480,915 505,924 520,935 545,944 570,948 600,951 620,944 655,935 690,932 730,933 795,935 870,942 930,950 1000,951 1090,953 1150,963 1190,971 1240,976 1300,977 1530,982 1853,983', '#993300', 3);
    line('sub', '49,1031 62,1031 105,1015 160,1004 215,993 270,982 300,975 325,979 360,979 395,967 450,949 500,938 560,932 590,930 610,931 650,938 700,940 740,939 790,936 850,936 900,940 960,944 1040,948 1100,953 1190,960 1250,967 1300,972 1380,974 1530,978 1600,979 1700,981 1853,983', '#0ff', 3);
    line('sub', sig.map(p => p.join()).join(' '), '#00f', 1);
  </script>
</body>

</html>
